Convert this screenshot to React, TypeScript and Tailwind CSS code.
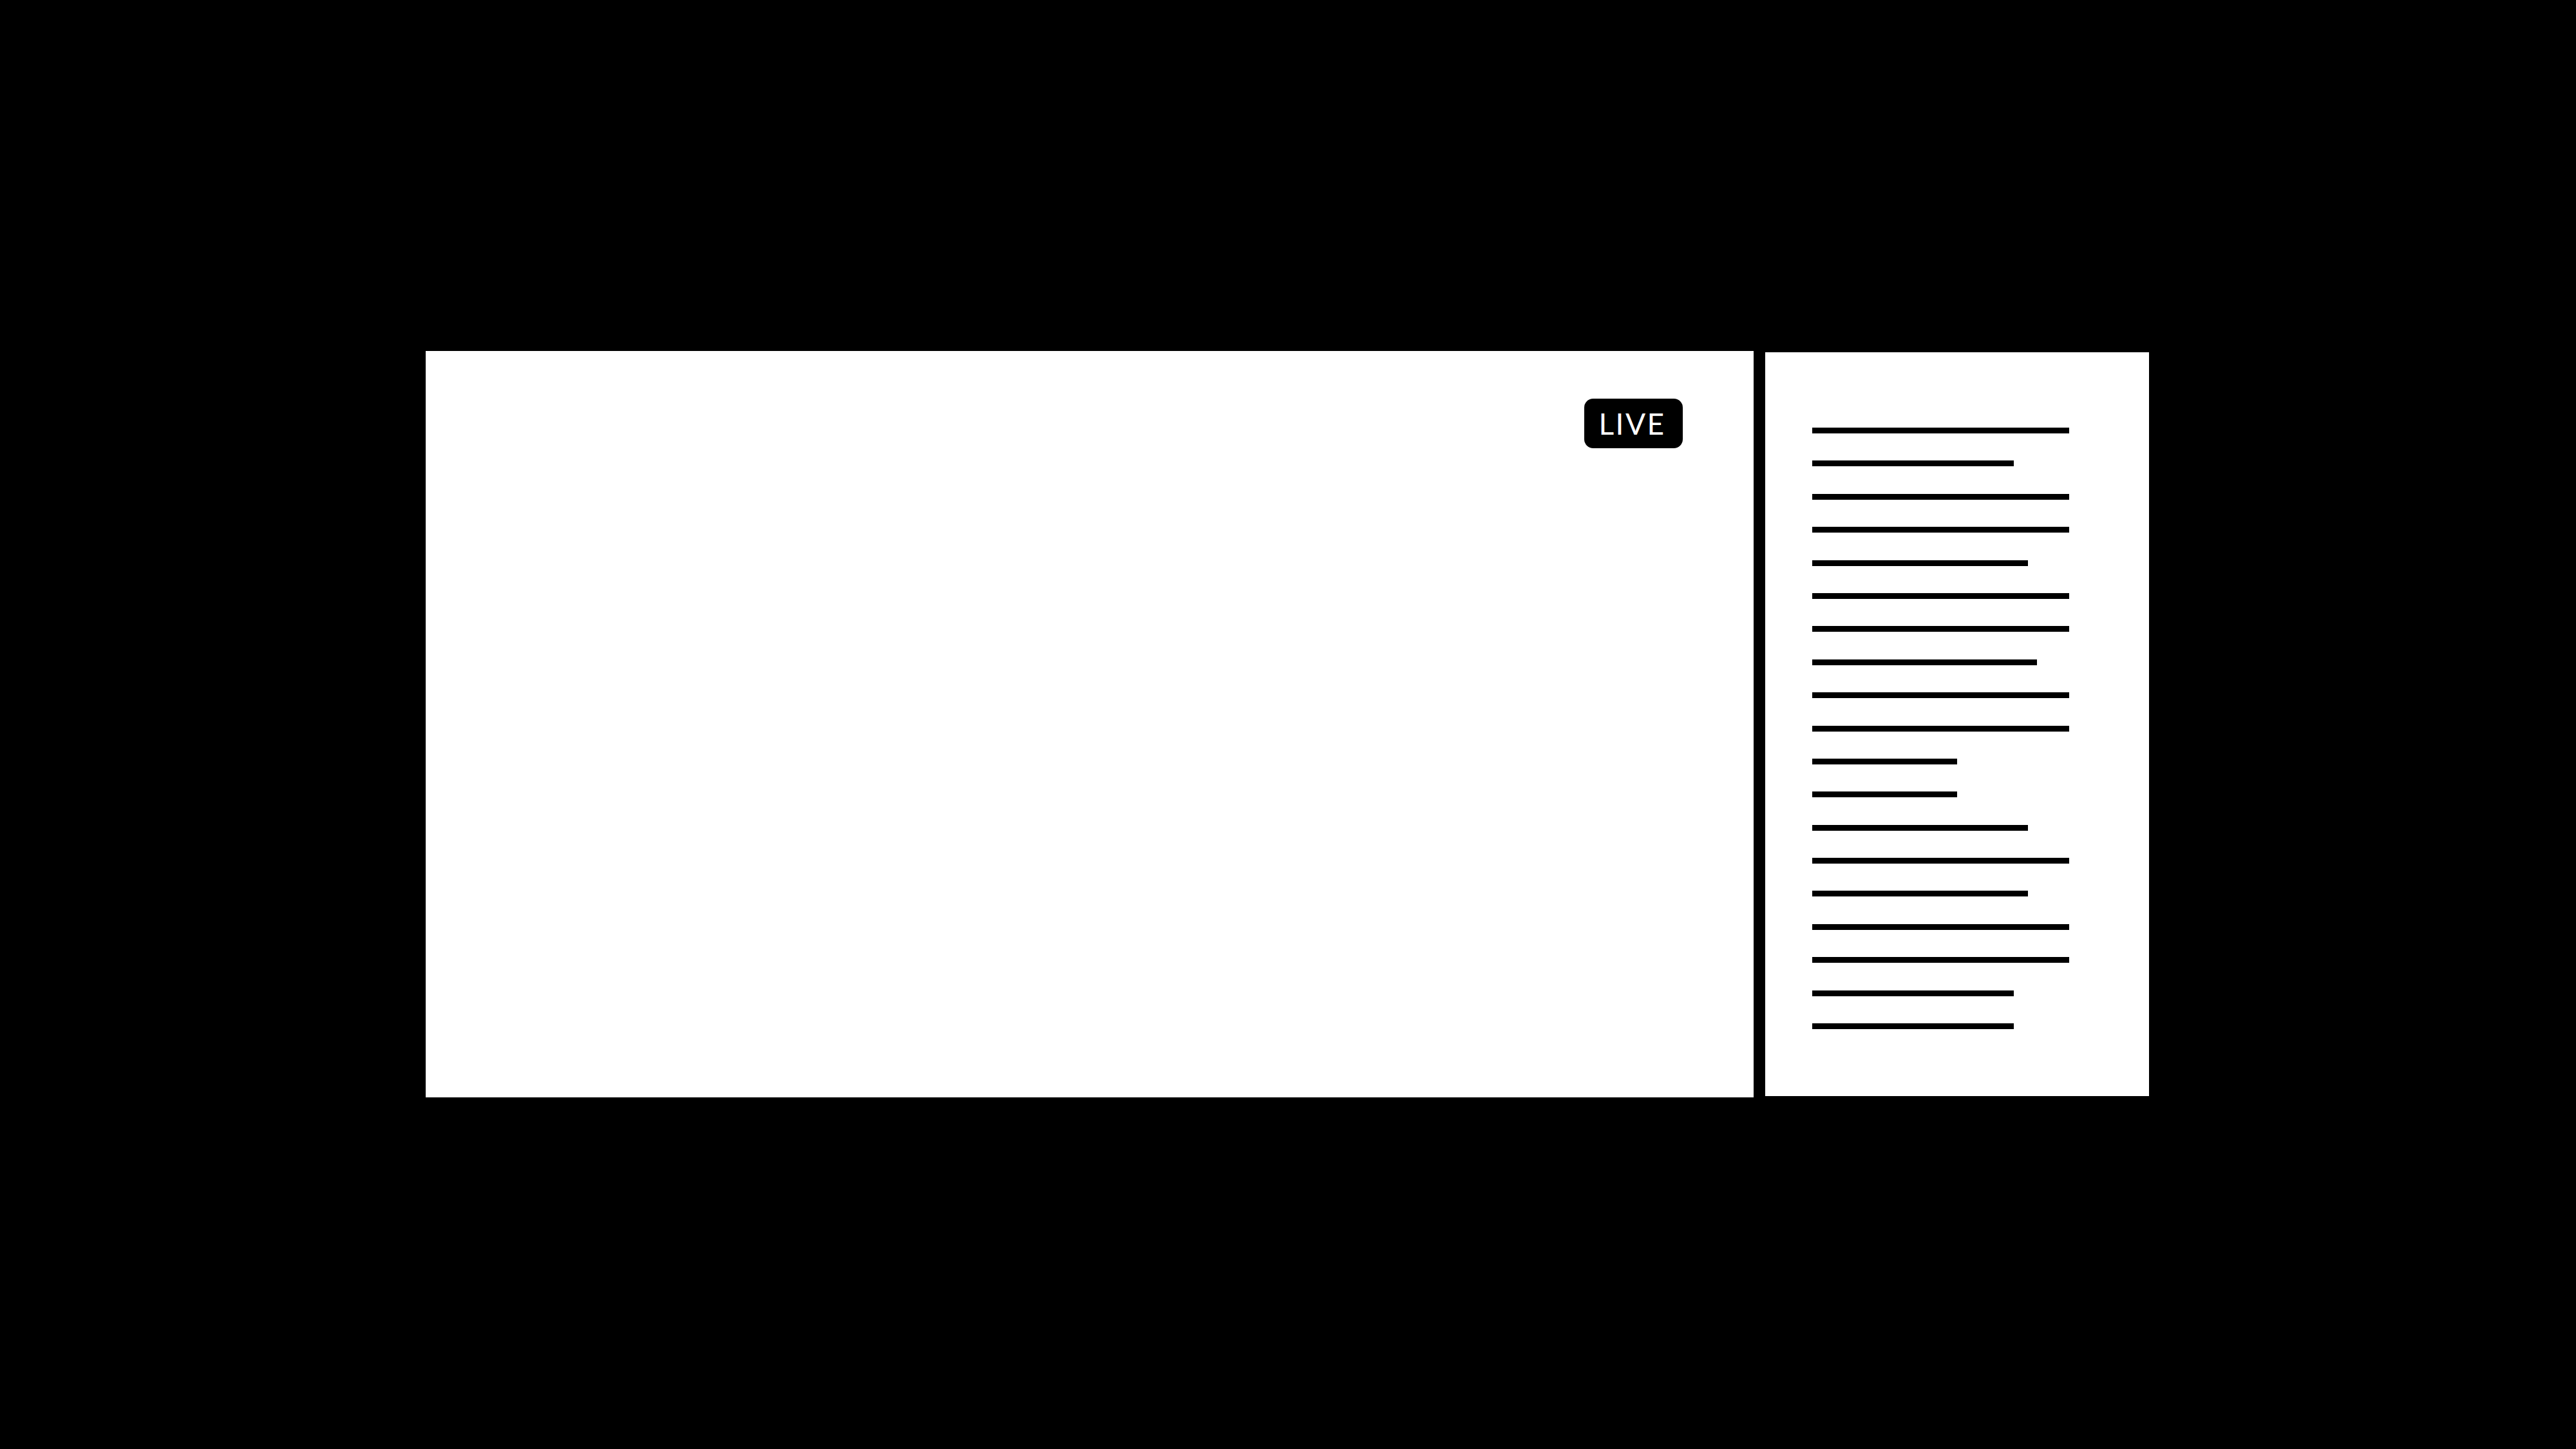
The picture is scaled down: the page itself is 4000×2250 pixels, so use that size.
import React from "react";

const lines = [399, 313, 399, 399, 335, 399, 399, 349, 399, 399, 225, 225, 335, 399, 335, 399, 399, 313, 313];

export default function App() {
  return (
    <div className="w-[4000px] h-[2250px] bg-black overflow-hidden">
      <div className="flex items-start pl-[661px] pt-[545px] gap-[18px]">
        <div className="relative w-[2062px] h-[1159px] bg-white">
          <div
            className="absolute top-[74px] right-[110px] w-[153px] h-[77px] rounded-[14px] bg-black flex items-center justify-center text-white text-[46px] leading-none tracking-[2.5px]"
            style={{ fontFamily: "Lato, 'Noto Sans', sans-serif" }}
          >
            <span className="-translate-x-[2px]">LIVE</span>
          </div>
        </div>
        <div className="mt-[2px] w-[596px] h-[1155px] bg-white pt-[117px] pl-[73px]">
          <div className="flex flex-col gap-[42.4px]">
            {lines.map((w, i) => (
              <div key={i} className="h-[9px] bg-black" style={{ width: w }} />
            ))}
          </div>
        </div>
      </div>
    </div>
  );
}
